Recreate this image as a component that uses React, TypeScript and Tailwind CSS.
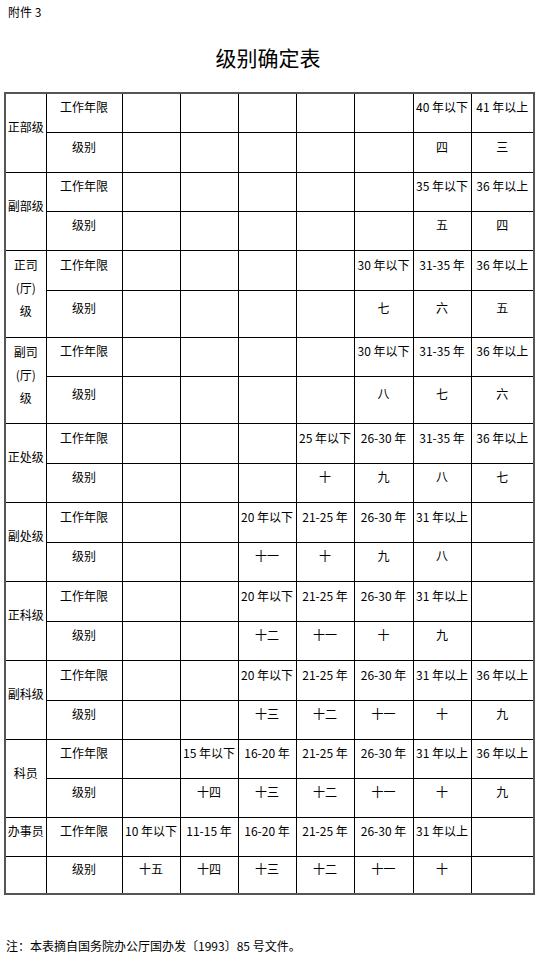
import React from "react";

type Group = { label: React.ReactNode; years: string[]; levels: string[]; h1: number; h2: number; split?: boolean };

const groups: Group[] = [
  { label: "正部级", years: ["", "", "", "", "", "40 年以下", "41 年以上"], levels: ["", "", "", "", "", "四", "三"], h1: 39, h2: 40 },
  { label: "副部级", years: ["", "", "", "", "", "35 年以下", "36 年以上"], levels: ["", "", "", "", "", "五", "四"], h1: 39, h2: 39 },
  {
    label: (
      <>
        正司
        <br />
        (厅)
        <br />
        级
      </>
    ),
    years: ["", "", "", "", "30 年以下", "31-35 年", "36 年以上"],
    levels: ["", "", "", "", "七", "六", "五"],
    h1: 40,
    h2: 47,
  },
  {
    label: (
      <>
        副司
        <br />
        (厅)
        <br />
        级
      </>
    ),
    years: ["", "", "", "", "30 年以下", "31-35 年", "36 年以上"],
    levels: ["", "", "", "", "八", "七", "六"],
    h1: 39,
    h2: 47,
  },
  { label: "正处级", years: ["", "", "", "25 年以下", "26-30 年", "31-35 年", "36 年以上"], levels: ["", "", "", "十", "九", "八", "七"], h1: 40, h2: 39 },
  { label: "副处级", years: ["", "", "20 年以下", "21-25 年", "26-30 年", "31 年以上", ""], levels: ["", "", "十一", "十", "九", "八", ""], h1: 40, h2: 39 },
  { label: "正科级", years: ["", "", "20 年以下", "21-25 年", "26-30 年", "31 年以上", ""], levels: ["", "", "十二", "十一", "十", "九", ""], h1: 40, h2: 39 },
  { label: "副科级", years: ["", "", "20 年以下", "21-25 年", "26-30 年", "31 年以上", "36 年以上"], levels: ["", "", "十三", "十二", "十一", "十", "九"], h1: 40, h2: 39 },
  { label: "科员", years: ["", "15 年以下", "16-20 年", "21-25 年", "26-30 年", "31 年以上", "36 年以上"], levels: ["", "十四", "十三", "十二", "十一", "十", "九"], h1: 39, h2: 39 },
  { label: "办事员", years: ["10 年以下", "11-15 年", "16-20 年", "21-25 年", "26-30 年", "31 年以上", ""], levels: ["十五", "十四", "十三", "十二", "十一", "十", ""], h1: 39, h2: 38, split: true },
];

const cell = "border border-black align-middle text-center whitespace-nowrap p-0 pb-[12px]";

export default function App() {
  return (
    <div
      className="w-[536px] min-h-[954px] bg-white text-black"
      style={{ fontFamily: '"Noto Sans CJK SC", "Noto Sans", sans-serif' }}
    >
      <div className="pt-[3px] pl-[8px] text-[12px] leading-[17px]">附件 3</div>
      <h1 className="mt-[22px] text-center text-[21px] leading-[30px] font-normal">级别确定表</h1>
      <table className="mt-[20px] ml-[4px] w-[529px] table-fixed border-collapse border-2 border-[#555] text-[12px] leading-[23px]">
        <colgroup>
          <col className="w-[41px]" />
          <col className="w-[76px]" />
          <col className="w-[58px]" />
          <col className="w-[58px]" />
          <col className="w-[58px]" />
          <col className="w-[58px]" />
          <col className="w-[59px]" />
          <col className="w-[58px]" />
          <col className="w-[63px]" />
        </colgroup>
        <tbody>
          {groups.map((g, gi) => (
            <React.Fragment key={gi}>
              <tr style={{ height: g.h1 }}>
                <td rowSpan={g.split ? 1 : 2} className={cell}>
                  {g.label}
                </td>
                <td className={cell}>工作年限</td>
                {g.years.map((y, i) => (
                  <td key={i} className={cell}>
                    {y}
                  </td>
                ))}
              </tr>
              <tr style={{ height: g.h2 }}>
                {g.split && <td className={cell}></td>}
                <td className={cell}>级别</td>
                {g.levels.map((l, i) => (
                  <td key={i} className={cell}>
                    {l}
                  </td>
                ))}
              </tr>
            </React.Fragment>
          ))}
        </tbody>
      </table>
      <div className="mt-[42px] pl-[6px] text-[12px] leading-[17px]">
        注：本表摘自国务院办公厅国办发〔1993〕85 号文件。
      </div>
    </div>
  );
}
